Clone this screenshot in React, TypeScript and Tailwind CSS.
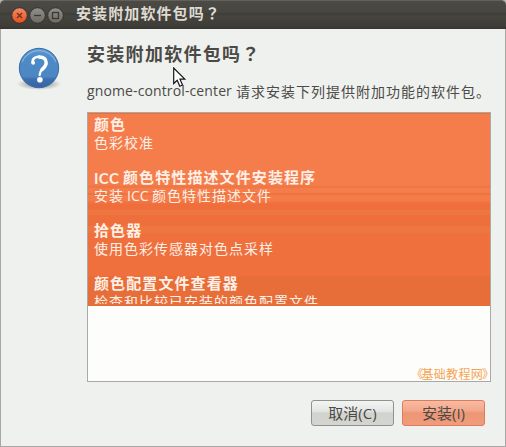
const CJK = "font-['Noto_Sans_CJK_SC',sans-serif]";
const LATIN = "font-['Open_Sans','Noto_Sans_CJK_SC',sans-serif]";
const PLAIN = "font-['Lato','Noto_Sans_CJK_SC',sans-serif]";
const CENTERED = "font-['Noto_Sans_CJK_TC','Noto_Sans_CJK_SC',sans-serif]";

function TitleBar() {
  return (
    <header className="flex h-[29px] shrink-0 items-center rounded-t-[5px] border-t border-[#63615a] bg-[linear-gradient(#4b4a44_0px,#474640_11px,#3e3e39_13px,#45443e_15px,#3e3d38_25px,#353430_28px)] pl-[11px]">
      <svg width="54" height="18" viewBox="0 0 54 18" className="shrink-0">
        <defs>
          <linearGradient id="close" x2="0" y2="1">
            <stop stopColor="#f58b66" />
            <stop offset="1" stopColor="#e64e1e" />
          </linearGradient>
          <linearGradient id="gray" x2="0" y2="1">
            <stop stopColor="#92908a" />
            <stop offset="1" stopColor="#6b6a63" />
          </linearGradient>
        </defs>
        <g stroke="#33322e">
          <circle cx="8.5" cy="9.5" r="7.8" fill="url(#close)" />
          <circle cx="26.5" cy="9.5" r="7.8" fill="url(#gray)" />
          <circle cx="44.5" cy="9.5" r="7.8" fill="url(#gray)" />
        </g>
        <g fill="none" stroke="#3b3934" strokeWidth="1.3">
          <path d="M6 7l5 5M11 7l-5 5" stroke="#7c3521" strokeWidth="1.6" />
          <path d="M23 9.5h7" />
          <rect x="41.5" y="6.5" width="6" height="6" />
        </g>
      </svg>
      <h1 className="ml-[11px] -mt-[4px] whitespace-nowrap text-[15px] leading-[20px] font-bold tracking-[1.1px] text-[#dfdbd2]">
        安装附加软件包吗<span className={CENTERED}>？</span>
      </h1>
    </header>
  );
}

function QuestionIcon() {
  return (
    <svg width="44" height="44" viewBox="0 0 44 44">
      <defs>
        <linearGradient id="ball" x2="0" y2="1">
          <stop stopColor="#5d9bd0" />
          <stop offset=".25" stopColor="#4e8ac6" />
          <stop offset=".72" stopColor="#4c87c3" />
          <stop offset=".78" stopColor="#3e6fae" />
          <stop offset="1" stopColor="#3764a2" />
        </linearGradient>
        <radialGradient id="shade">
          <stop offset=".5" stopColor="#b4b6b4" />
          <stop offset="1" stopColor="#eff0ee" />
        </radialGradient>
      </defs>
      <ellipse cx="22" cy="37" rx="22" ry="6" fill="url(#shade)" />
      <circle cx="22" cy="21" r="19.7" fill="url(#ball)" stroke="#386ba8" />
      <path d="M5 15A18.4 18.4 0 0 1 39 15" fill="none" stroke="#82b3df" strokeWidth="1.2" />
      <g fill="none" stroke="#fff" strokeLinecap="round">
        <path d="M15.800 15.800C15 11.500 18 9.800 22 9.800" strokeWidth="2.600" />
        <path d="M22 10c4.800 0 7.200 2.200 7.200 5.800 0 3.400-2.200 5-4.200 6.800" strokeWidth="3.400" />
        <path d="M25 22.600c-1.600 1.400-2.300 3-2.300 5.200" strokeWidth="2.400" />
      </g>
      <circle cx="16.200" cy="15.800" r="1.900" fill="#fff" />
      <circle cx="22.900" cy="32.700" r="2.800" fill="#fff" />
    </svg>
  );
}

const packages = [
  { prefix: "", name: "颜色", lead: "", latin: "", detail: "色彩校准" },
  { prefix: "ICC", name: "颜色特性描述文件安装程序", lead: "安装", latin: "ICC", detail: "颜色特性描述文件" },
  { prefix: "", name: "拾色器", lead: "", latin: "", detail: "使用色彩传感器对色点采样" },
  { prefix: "", name: "颜色配置文件查看器", lead: "", latin: "", detail: "检查和比较已安装的颜色配置文件" },
];

function PackageList() {
  return (
    <section className="relative mt-[12px] h-[270px] w-[404px] border border-[#a9aaa6] bg-[#fdfefc]">
      <div className="h-[193px] bg-[linear-gradient(#ed6d38_0px,#ed6d38_1px,#f57d4c_1px,#f57d4c_72px,#ef7743_73px,#ef7743_75px,#f57d4c_75px,#f57d4c_80px,#ed7440_80px,#ed7440_82px,#f57b49_82px,#f57b49_88px,#ee7340_89px,#ee7340_91px,#ef6e3b_91px,#ef6e3b_97px,#ee7640_97px,#ee7640_102px,#ef6f3c_102px,#ef6f3c_113px,#ee7640_113px,#ee7640_120px,#ef6f3d_121px,#ef6f3d_163px,#e76e39_163px)]">
        <ul className="flex h-[191px] flex-col gap-[17px] overflow-hidden pt-[2px] pl-[6px] text-[#fff0e7]">
          {packages.map((item) => (
            <li key={item.name} className="shrink-0 whitespace-nowrap">
              <div className="flex h-[18px] text-[15px] leading-[18px] font-bold tracking-[1.1px]">
                {item.prefix && (
                  <span className={`${PLAIN} w-[29px] pt-px text-[15px] tracking-[0.4px]`}>{item.prefix}</span>
                )}
                {item.name}
              </div>
              <div className="flex h-[18px] text-[14px] leading-[18px] tracking-[1px]">
                {item.lead}
                {item.latin && (
                  <span className={`${LATIN} w-[28px] pt-px pl-[3px] text-[14px] tracking-[0px]`}>{item.latin}</span>
                )}
                {item.detail}
              </div>
            </li>
          ))}
        </ul>
      </div>
      <span className="absolute right-[3px] bottom-0 flex text-[12px] leading-[15px] tracking-[0.3px] whitespace-nowrap text-[#f6a251]">
        <span className="mr-[-2px] flex w-[8px] justify-end">《</span>
        基础教程网
        <span className="-ml-px w-[5px]">》</span>
      </span>
    </section>
  );
}

export default function App() {
  return (
    <div className={`${CJK} h-[447px] w-[506px] overflow-hidden bg-[#b5b3b0] text-[#4b4a47]`}>
      <TitleBar />
      <main className="flex h-[418px] border-r border-b border-l border-[#aaa7a5] bg-[#eff1ee]">
        <div className="w-[86px] shrink-0 pt-[18px] pl-[16px]">
          <QuestionIcon />
        </div>
        <div className="w-[404px] pt-[11px]">
          <h2 className="text-[18px] leading-[26px] font-bold tracking-[1.3px] whitespace-nowrap">
            安装附加软件包吗<span className={CENTERED}>？</span>
          </h2>
          <p className="mt-[14px] -mb-[2px] flex h-[22px] text-[14px] leading-[22px] tracking-[1px] whitespace-nowrap">
            <span className={`${LATIN} w-[150px] tracking-[0.12px]`}>gnome-control-center</span>
            请求安装下列提供附加功能的软件包。
          </p>
          <PackageList />
          <div className="mt-[18px] flex justify-end gap-[8px] pr-[6px] text-[15px]">
            <button className="h-[26px] w-[83px] rounded-[3px] border border-[#91928d] bg-[linear-gradient(#f3f5f3,#e2e5e3_43%,#d2d3cd_50%,#d4d5d0)] pb-px leading-[23px] whitespace-nowrap">
              取消<span className={LATIN}>(C)</span>
            </button>
            <button className="h-[26px] w-[83px] rounded-[3px] border border-[#de7b5b] bg-[linear-gradient(#f8bba1,#f3a88c_40%,#ed9675_50%,#f09c7c)] pb-px leading-[23px] whitespace-nowrap">
              安装<span className={LATIN}>(I)</span>
            </button>
          </div>
        </div>
      </main>
      <svg className="absolute top-[67px] left-[173px]" width="14" height="21" viewBox="0 0 14 21">
        <path d="M.7 1v15.5l3.500-3.300 2.600 6 2.700-1.200-2.500-5.800h4.800z" fill="#fff" stroke="#17161a" strokeWidth="1.2" />
      </svg>
    </div>
  );
}
